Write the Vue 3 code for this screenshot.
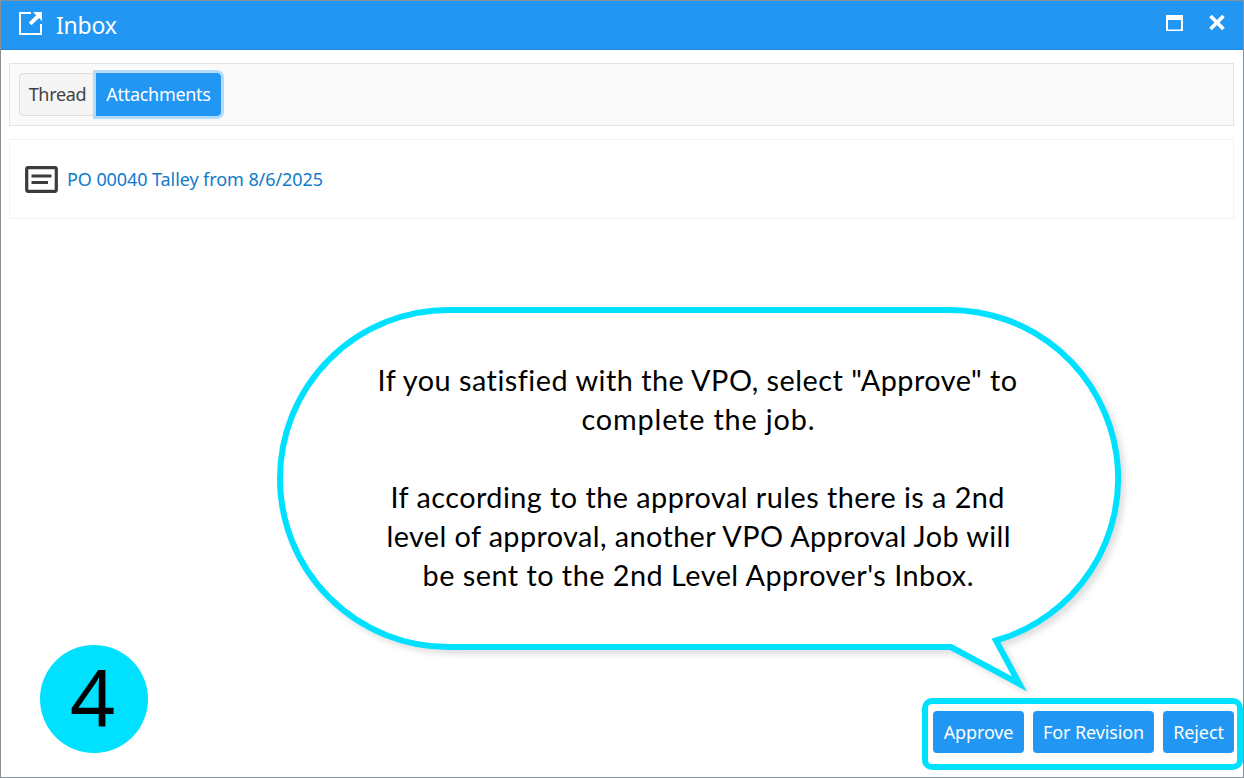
<template>
  <div class="window">
    <header class="titlebar">
      <svg class="titlebar__icon" width="24" height="24" viewBox="0 0 24 24">
        <path d="M12 1H1V22H22V12" fill="none" stroke="#fff" stroke-width="2" />
        <path d="M14 0H23V9L20 6L12.5 13.2L9.8 10.5L17.2 3.2Z" fill="#fff" />
      </svg>
      <h1 class="titlebar__title">Inbox</h1>
      <div class="titlebar__actions">
        <button class="titlebar__button" aria-label="Maximize">
          <svg width="17" height="17" viewBox="0 0 17 17">
            <path d="M0 0H17V16H0ZM2 5V14.500H15V5Z" fill="#fff" fill-rule="evenodd" />
          </svg>
        </button>
        <button class="titlebar__button" aria-label="Close">
          <svg width="16" height="17" viewBox="0 0 16 17">
            <path d="M1.500 1L14.500 14M14.500 1L1.500 14" stroke="#fff" stroke-width="3.600" />
          </svg>
        </button>
      </div>
    </header>

    <nav class="toolbar">
      <button
        v-for="tab in tabs"
        :key="tab"
        class="tab"
        :class="{ 'is-active': tab === activeTab }"
        @click="activeTab = tab"
      >
        {{ tab }}
      </button>
    </nav>

    <section class="attachment">
      <svg width="33" height="27" viewBox="0 0 33 27">
        <rect x="1.7" y="1.7" width="29.6" height="23.6" rx="1.5" fill="none" stroke="#3c3c3c" stroke-width="3.2" />
        <path d="M6.500 10H26.500M6.500 16.400H23" stroke="#3c3c3c" stroke-width="3" />
      </svg>
      <a class="attachment__link">PO 00040 Talley from 8/6/2025</a>
    </section>

    <footer class="footer">
      <span class="step">4</span>
      <div class="actions">
        <button
          v-for="action in actions"
          :key="action.label"
          class="actions__button"
          :style="{ width: action.width + 'px' }"
        >
          {{ action.label }}
        </button>
      </div>
    </footer>

    <svg class="callout" width="870" height="410" viewBox="270 300 870 410">
      <path
        class="callout__shape"
        d="M448.500 310H949.500A168.500 168.500 0 0 1 996 640.500L1019.500 684L951 647H448.500A168.500 168.500 0 0 1 448.500 310Z"
      />
      <text
        v-for="line in lines"
        :key="line.y"
        class="callout__text"
        :x="line.x"
        :y="line.y"
        :textLength="line.width"
      >{{ line.text }}</text>
    </svg>
  </div>
</template>

<script setup>
import { ref } from 'vue';

const tabs = ['Thread', 'Attachments'];
const activeTab = ref('Attachments');

const actions = [
  { label: 'Approve', width: 91 },
  { label: 'For Revision', width: 121 },
  { label: 'Reject', width: 71 },
];

const lines = [
  { text: 'If you satisfied with the VPO, select "Approve" to', x: 377.5, y: 391, width: 639.5 },
  { text: 'complete the job.', x: 581.5, y: 430, width: 233 },
  { text: 'If according to the approval rules there is a 2nd', x: 390.5, y: 508, width: 614 },
  { text: 'level of approval, another VPO Approval Job will', x: 386.5, y: 547, width: 624 },
  { text: "be sent to the 2nd Level Approver's Inbox.", x: 422.5, y: 586, width: 551 },
];
</script>

<style>
body {
  margin: 0;
  background: #fff;
}
</style>

<style scoped>
.window {
  position: relative;
  display: flex;
  flex-direction: column;
  box-sizing: border-box;
  width: 1244px;
  height: 778px;
  border: 1px solid #868e96;
  overflow: hidden;
  background: #fff;
  font-family: 'Noto Sans', 'Open Sans', sans-serif;
}

button {
  margin: 0;
  padding: 0;
  border: 0;
  background: none;
  font-family: inherit;
}

svg {
  display: block;
  flex: none;
}

.titlebar {
  display: flex;
  align-items: center;
  box-sizing: border-box;
  height: 49px;
  padding: 0 18px 3px;
  border-bottom: 1px solid #1f87dc;
  background: #2196f3;
}

.titlebar__title {
  margin: 2px 0 0 13px;
  color: #fff;
  font-size: 23px;
  font-weight: 400;
  line-height: 30px;
  letter-spacing: -0.2px;
}

.titlebar__actions {
  display: flex;
  gap: 26px;
  margin-left: auto;
}

.toolbar {
  display: flex;
  box-sizing: border-box;
  height: 63px;
  margin: 13px 9px 0 8px;
  padding: 9px;
  border: 1px solid #e3e3e3;
  background: #fafafa;
}

.tab {
  box-sizing: border-box;
  width: 77px;
  height: 43px;
  padding: 0 0 2px;
  border: 1px solid #dedede;
  border-radius: 4px 0 0 4px;
  background: #f5f5f5;
  color: #424242;
  font-size: 18px;
  letter-spacing: -0.3px;
}

.tab.is-active {
  z-index: 1;
  width: 125px;
  border-color: #2196f3;
  border-radius: 0 4px 4px 0;
  background: #2196f3;
  color: #fff;
  box-shadow: 0 0 0 3px #b5dbfa;
}

.attachment {
  display: flex;
  align-items: center;
  gap: 9px;
  box-sizing: border-box;
  height: 80px;
  margin: 13px 9px 0 8px;
  padding: 0 15px;
  border: 1px solid #f2f2f2;
}

.attachment__link {
  color: #0f7bca;
  font-size: 18px;
  letter-spacing: -0.08px;
}

.footer {
  display: flex;
  align-items: flex-end;
  justify-content: space-between;
  margin-top: auto;
  padding: 0 0 7px 38.5px;
}

.step {
  width: 108px;
  height: 108px;
  margin-bottom: 17.5px;
  border-radius: 50%;
  background: #00e1ff;
  color: #000;
  font-size: 79px;
  line-height: 104px;
  text-align: center;
  text-indent: -2px;
}

.actions {
  display: flex;
  gap: 9px;
  box-sizing: border-box;
  height: 72px;
  padding: 7px 3px 0 5px;
  border: 6px solid #00e1ff;
  border-radius: 10px;
}

.actions__button {
  height: 42px;
  border-radius: 4px;
  background: #2196f3;
  color: #fff;
  font-size: 18px;
  letter-spacing: -0.12px;
  white-space: nowrap;
}

.callout {
  position: absolute;
  top: 299px;
  left: 269px;
}

.callout__shape {
  fill: #fff;
  stroke: #00e1ff;
  stroke-width: 6;
  stroke-miterlimit: 10;
  filter: drop-shadow(4px 4px 3px rgba(0, 0, 0, 0.13));
}

.callout__text {
  fill: #000;
  font-family: Lato, 'Open Sans', sans-serif;
  font-size: 28.8px;
  font-variant-ligatures: none;
}
</style>
